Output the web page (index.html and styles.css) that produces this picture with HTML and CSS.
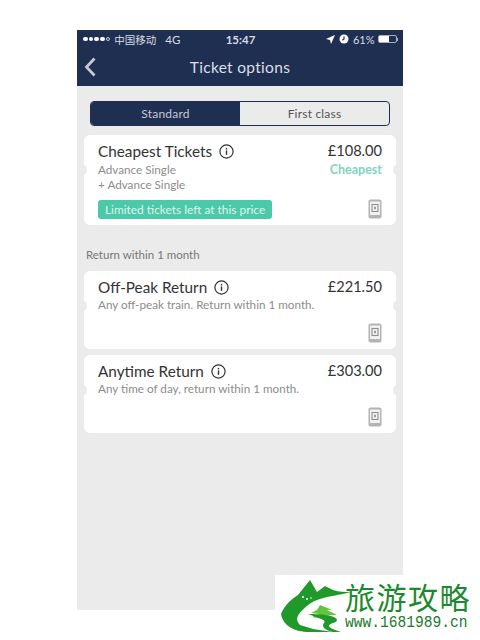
FILE: index.html
```html
<!DOCTYPE html>
<html>
<head>
  <title>Ticket options</title>
  <link rel="stylesheet" href="styles.css">
</head>
<body>
  <div class="phone">
    <div class="status-bar">
      <div class="status-left">
        <span class="dots"><i></i><i></i><i></i><i></i><i class="empty"></i></span>
        <span class="carrier">中国移动</span>
        <span class="network">4G</span>
      </div>
      <div class="status-time">15:47</div>
      <div class="status-right">
        <svg width="9" height="9" viewBox="0 0 9 9"><path d="M9 0 L0 4 L4 5 L5 9 Z" fill="#fff"/></svg>
        <svg width="10" height="10" viewBox="0 0 10 10"><circle cx="5" cy="5" r="4.5" fill="#fff"/><path d="M5 2.5 V5 L3.3 6.2" stroke="#1f2f52" stroke-width="1.2" fill="none"/></svg>
        <span class="battery-text">61%</span>
        <span class="battery"><span class="battery-fill"></span></span>
        <span class="battery-nub"></span>
      </div>
    </div>

    <div class="nav-bar">
      <svg class="back" width="12" height="20" viewBox="0 0 12 20"><path d="M10.5 1.5 L2.5 10 L10.5 18.5" stroke="#c4c9d2" stroke-width="2.8" fill="none"/></svg>
      <h1>Ticket options</h1>
    </div>

    <div class="content">
      <div class="tabs">
        <div class="tab active">Standard</div>
        <div class="tab">First class</div>
      </div>

      <div class="card card-first">
        <div class="card-row">
          <div class="card-title">Cheapest Tickets <svg class="info" width="15" height="15" viewBox="0 0 15 15"><circle cx="7.5" cy="7.5" r="6.6" stroke="#333" stroke-width="1.2" fill="none"/><rect x="6.8" y="6.4" width="1.4" height="4.4" fill="#333"/><rect x="6.8" y="3.9" width="1.4" height="1.5" fill="#333"/></svg></div>
          <div class="price">£108.00</div>
        </div>
        <div class="card-row card-details">
          <div class="desc">Advance Single<br>+ Advance Single</div>
          <div class="cheapest">Cheapest</div>
        </div>
        <div class="card-bottom">
          <span class="badge">Limited tickets left at this price</span>
          <svg class="mticket" width="14" height="20" viewBox="0 0 14 20"><rect x="0.5" y="0.5" width="13" height="19" rx="2" fill="#b4b4b4"/><rect x="2" y="2.5" width="10" height="13.5" fill="#f2f2f2"/><rect x="4" y="5.5" width="6" height="7" fill="none" stroke="#8f8f8f" stroke-width="1.1"/><rect x="6" y="7.8" width="2" height="2.4" fill="#999"/></svg>
        </div>
      </div>

      <div class="section-label">Return within 1 month</div>

      <div class="card card-return">
        <div class="card-row">
          <div class="card-title">Off-Peak Return <svg class="info" width="15" height="15" viewBox="0 0 15 15"><circle cx="7.5" cy="7.5" r="6.6" stroke="#333" stroke-width="1.2" fill="none"/><rect x="6.8" y="6.4" width="1.4" height="4.4" fill="#333"/><rect x="6.8" y="3.9" width="1.4" height="1.5" fill="#333"/></svg></div>
          <div class="price">£221.50</div>
        </div>
        <div class="desc">Any off-peak train. Return within 1 month.</div>
        <div class="card-bottom end">
          <svg class="mticket" width="14" height="20" viewBox="0 0 14 20"><rect x="0.5" y="0.5" width="13" height="19" rx="2" fill="#b4b4b4"/><rect x="2" y="2.5" width="10" height="13.5" fill="#f2f2f2"/><rect x="4" y="5.5" width="6" height="7" fill="none" stroke="#8f8f8f" stroke-width="1.1"/><rect x="6" y="7.8" width="2" height="2.4" fill="#999"/></svg>
        </div>
      </div>

      <div class="card card-return">
        <div class="card-row">
          <div class="card-title">Anytime Return <svg class="info" width="15" height="15" viewBox="0 0 15 15"><circle cx="7.5" cy="7.5" r="6.6" stroke="#333" stroke-width="1.2" fill="none"/><rect x="6.8" y="6.4" width="1.4" height="4.4" fill="#333"/><rect x="6.8" y="3.9" width="1.4" height="1.5" fill="#333"/></svg></div>
          <div class="price">£303.00</div>
        </div>
        <div class="desc">Any time of day, return within 1 month.</div>
        <div class="card-bottom end">
          <svg class="mticket" width="14" height="20" viewBox="0 0 14 20"><rect x="0.5" y="0.5" width="13" height="19" rx="2" fill="#b4b4b4"/><rect x="2" y="2.5" width="10" height="13.5" fill="#f2f2f2"/><rect x="4" y="5.5" width="6" height="7" fill="none" stroke="#8f8f8f" stroke-width="1.1"/><rect x="6" y="7.8" width="2" height="2.4" fill="#999"/></svg>
        </div>
      </div>
    </div>
  </div>

  <div class="watermark">
    <svg class="wm-logo" width="80" height="63" viewBox="0 3 80 63">
      <path d="M6 42 C10 32 17 27 23 23 L35 8 L42 20 L50 14 L58 18 C64 20 70 20 76 20 C66 23 52 24 42 28 C34 31 28 37 24 42 C21 46 22 50 25 53 L38 57 L58 60 L34 60 C20 60 8 54 6 42 Z" fill="#1f9a2a"/>
      <circle cx="28" cy="25" r="1" fill="#fff"/>
      <circle cx="32" cy="27" r="1" fill="#fff"/>
      <circle cx="36" cy="26" r="0.8" fill="#fff"/>
      <path d="M45 33 L57 38 L52 38 L62 43 L55 43 L48 47 L37 45 L44 42 L36 41 L42 38 Z" fill="#62c438"/>
      <path d="M33 42 C48 42 62 44 62 48 C62 51 54 51 54 54 C54 56 60 58 66 60 L58 60 C50 58 46 55 49 51 C52 48 44 46 33 42 Z" fill="#1f9a2a"/>
    </svg>
    <div class="wm-text">
      <div class="wm-title">旅游攻略</div>
      <div class="wm-url">www.1681989.cn</div>
    </div>
  </div>
</body>
</html>
```

FILE: styles.css
```css
body {
  margin: 0;
  height: 640px;
  overflow: hidden;
  background-color: #ffffff;
  font-family: Lato, "Noto Sans CJK SC", sans-serif;
}

.phone {
  width: 326px;
  height: 580px;
  margin: 30px 0 0 77px;
  background-color: #ebebeb;
}

/* status bar */
.status-bar {
  display: grid;
  grid-template-columns: 1fr auto 1fr;
  align-items: center;
  height: 22px;
  padding: 0 5px 4px 6px;
  box-sizing: border-box;
  background-color: #1f2f52;
  color: #d9dce3;
  font-size: 11px;
}

.status-left {
  display: flex;
  align-items: center;
}

.dots {
  display: flex;
  gap: 1.2px;
}

.dots i {
  width: 4.5px;
  height: 4.5px;
  border-radius: 50%;
  background-color: #ffffff;
}

.dots i.empty {
  box-sizing: border-box;
  background-color: transparent;
  border: 1px solid #cfd3da;
}

.carrier {
  margin-left: 4px;
  font-size: 10.5px;
}

.network {
  margin-left: 9px;
  font-size: 11.5px;
}

.status-time {
  font-weight: 700;
  font-size: 11.5px;
}

.status-right {
  display: flex;
  align-items: center;
  justify-content: flex-end;
  gap: 4px;
}

.battery {
  width: 19px;
  height: 8px;
  border: 1px solid #aab0bc;
  border-radius: 2px;
  margin-left: -1px;
  box-sizing: border-box;
}

.battery-fill {
  display: block;
  width: 61%;
  height: 100%;
  background-color: #ffffff;
}

.battery-nub {
  width: 1.5px;
  height: 3px;
  margin-left: -4px;
  background-color: #aab0bc;
}

/* nav */
.nav-bar {
  position: relative;
  height: 34px;
  background-color: #1f2f52;
  display: flex;
  align-items: center;
  justify-content: center;
}

.nav-bar h1 {
  margin: 0 0 4px;
  color: #dcdfe5;
  font-size: 15.5px;
  font-weight: 400;
  letter-spacing: 0.3px;
}

.back {
  position: absolute;
  left: 7px;
  top: 5px;
}

/* content */
.content {
  padding: 15px 7px 0;
}

.tabs {
  display: flex;
  height: 25px;
  margin: 0 6px 9px;
  box-sizing: border-box;
  border: 1px solid #1f2f52;
  border-radius: 4px;
  overflow: hidden;
  font-size: 12px;
}

.tab {
  flex: 1;
  display: flex;
  align-items: center;
  justify-content: center;
  color: #555555;
  letter-spacing: 0.2px;
}

.tab.active {
  background-color: #1f2f52;
  color: #c4c9d2;
}

.card {
  position: relative;
  background-color: #ffffff;
  border-radius: 6px;
  padding: 7px 14px 0;
  box-sizing: border-box;
  color: #333333;
}

.card::before,
.card::after {
  content: "";
  position: absolute;
  width: 6px;
  height: 10px;
  border-radius: 50%;
  background-color: #ebebeb;
  top: 30px;
}

.card::before {
  left: -3px;
}

.card::after {
  right: -3px;
}

.card-first {
  height: 90px;
}

.card-return {
  height: 78px;
  margin-bottom: 6px;
}

.card-row {
  display: flex;
  justify-content: space-between;
  align-items: flex-start;
}

.card-details {
  margin-top: 2px;
}

.card-title {
  display: flex;
  align-items: center;
  gap: 7px;
  font-size: 15.3px;
  line-height: 18px;
}

.price {
  font-size: 14.6px;
  line-height: 18px;
}

.desc {
  font-size: 11.7px;
  line-height: 15px;
  color: #8c8c8c;
}

.card-return .desc {
  margin-top: 1px;
}

.cheapest {
  font-size: 12.5px;
  line-height: 15px;
  font-weight: 700;
  color: #7ed6c0;
}

.card-bottom {
  display: flex;
  justify-content: space-between;
  align-items: center;
  margin-top: 7px;
}

.card-bottom.end {
  justify-content: flex-end;
  margin-top: 11px;
}

.badge {
  background-color: #4cc9a8;
  color: #dff5ee;
  font-size: 11.9px;
  line-height: 19px;
  padding: 0 7px;
  border-radius: 3px;
}

.section-label {
  margin: 23px 2px 9px;
  font-size: 11.5px;
  line-height: 14px;
  color: #777777;
}

/* watermark over the corner */
.watermark {
  position: absolute;
  left: 275px;
  top: 575px;
  width: 205px;
  height: 65px;
  background-color: #ffffff;
  display: flex;
}

.wm-logo {
  flex: none;
}

.wm-text {
  margin-left: -10px;
  padding-top: 3px;
}

.wm-title {
  font-size: 30px;
  line-height: 37px;
  letter-spacing: 1.5px;
  color: #1c8a2c;
  font-family: "Noto Sans CJK SC", sans-serif;
  white-space: nowrap;
}

.wm-url {
  font-family: "Liberation Mono", monospace;
  font-size: 14.6px;
  line-height: 15px;
  color: #1c7a2c;
  white-space: nowrap;
  transform: scaleY(1.15);
}
```
